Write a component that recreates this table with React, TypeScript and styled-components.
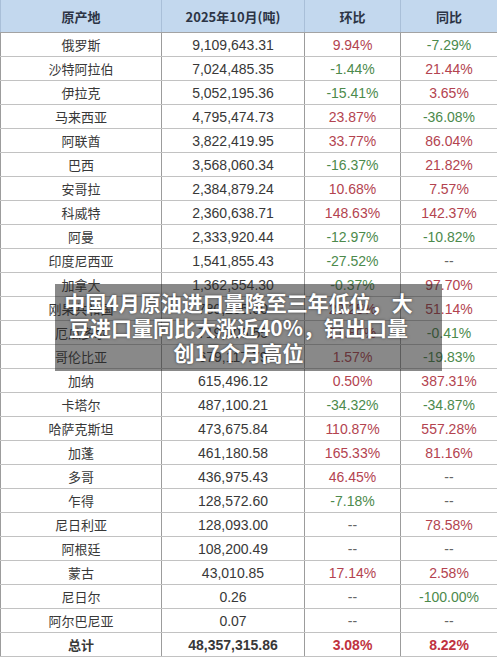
import styled, { createGlobalStyle } from "styled-components";

type Tone = "up" | "down" | "none";

interface Row {
    name: string;
    amount: string;
    mom: string;
    yoy: string;
}

const rows: Row[] = [
    { name: "俄罗斯", amount: "9,109,643.31", mom: "9.94%", yoy: "-7.29%" },
    { name: "沙特阿拉伯", amount: "7,024,485.35", mom: "-1.44%", yoy: "21.44%" },
    { name: "伊拉克", amount: "5,052,195.36", mom: "-15.41%", yoy: "3.65%" },
    { name: "马来西亚", amount: "4,795,474.73", mom: "23.87%", yoy: "-36.08%" },
    { name: "阿联酋", amount: "3,822,419.95", mom: "33.77%", yoy: "86.04%" },
    { name: "巴西", amount: "3,568,060.34", mom: "-16.37%", yoy: "21.82%" },
    { name: "安哥拉", amount: "2,384,879.24", mom: "10.68%", yoy: "7.57%" },
    { name: "科威特", amount: "2,360,638.71", mom: "148.63%", yoy: "142.37%" },
    { name: "阿曼", amount: "2,333,920.44", mom: "-12.97%", yoy: "-10.82%" },
    { name: "印度尼西亚", amount: "1,541,855.43", mom: "-27.52%", yoy: "--" },
    { name: "加拿大", amount: "1,362,554.30", mom: "-0.37%", yoy: "97.70%" },
    { name: "刚果共和国", amount: "780,255.50", mom: "22.25%", yoy: "51.14%" },
    { name: "厄瓜多尔", amount: "719,306.55", mom: "21.80%", yoy: "-0.41%" },
    { name: "哥伦比亚", amount: "679,117.79", mom: "1.57%", yoy: "-19.83%" },
    { name: "加纳", amount: "615,496.12", mom: "0.50%", yoy: "387.31%" },
    { name: "卡塔尔", amount: "487,100.21", mom: "-34.32%", yoy: "-34.87%" },
    { name: "哈萨克斯坦", amount: "473,675.84", mom: "110.87%", yoy: "557.28%" },
    { name: "加蓬", amount: "461,180.58", mom: "165.33%", yoy: "81.16%" },
    { name: "多哥", amount: "436,975.43", mom: "46.45%", yoy: "--" },
    { name: "乍得", amount: "128,572.60", mom: "-7.18%", yoy: "--" },
    { name: "尼日利亚", amount: "128,093.00", mom: "--", yoy: "78.58%" },
    { name: "阿根廷", amount: "108,200.49", mom: "--", yoy: "--" },
    { name: "蒙古", amount: "43,010.85", mom: "17.14%", yoy: "2.58%" },
    { name: "尼日尔", amount: "0.26", mom: "--", yoy: "-100.00%" },
    { name: "阿尔巴尼亚", amount: "0.07", mom: "--", yoy: "--" },
];

const toneOf = (v: string): Tone => {
    if (v === "--") return "none";
    return v.startsWith("-") ? "down" : "up";
};

const App = () => {
    return (
        <>
            <GlobalStyle />
            <Page>
                <Table>
                    <colgroup>
                        <col style={{ width: 161 }} />
                        <col style={{ width: 143 }} />
                        <col style={{ width: 96 }} />
                        <col style={{ width: 97 }} />
                    </colgroup>
                    <thead>
                        <tr>
                            <HeadCell>原产地</HeadCell>
                            <HeadCell>2025年10月(吨)</HeadCell>
                            <HeadCell>环比</HeadCell>
                            <HeadCell>同比</HeadCell>
                        </tr>
                    </thead>
                    <tbody>
                        {rows.map((r) => (
                            <tr key={r.name}>
                                <NameCell>{r.name}</NameCell>
                                <Cell>{r.amount}</Cell>
                                <Cell $tone={toneOf(r.mom)}>{r.mom}</Cell>
                                <Cell $tone={toneOf(r.yoy)}>{r.yoy}</Cell>
                            </tr>
                        ))}
                        <tr>
                            <NameCell $bold>总计</NameCell>
                            <Cell $bold>48,357,315.86</Cell>
                            <Cell $bold $tone="total">3.08%</Cell>
                            <Cell $bold $tone="total">8.22%</Cell>
                        </tr>
                    </tbody>
                </Table>
                <Banner>
                    中国4月原油进口量降至三年低位，大
                    <br />
                    豆进口量同比大涨近40%，铝出口量
                    <br />
                    创17个月高位
                </Banner>
            </Page>
        </>
    );
};

export default App;

const GlobalStyle = createGlobalStyle`
    html, body {
        margin: 0;
        padding: 0;
        background: #ffffff;
    }
    body {
        font-family: "Liberation Sans", "Noto Sans CJK SC", sans-serif;
    }
`;

const Page = styled.div`
    position: relative;
    width: 497px;
    height: 658px;
    overflow: hidden;
    background: #ffffff;
`;

const Table = styled.table`
    width: 497px;
    border-collapse: collapse;
    table-layout: fixed;
    border-left: 1px solid #b4b4b4;
    border-right: 1px solid #b4b4b4;
`;

const HeadCell = styled.th`
    height: 32px;
    padding: 0;
    background: #c3d8ee;
    color: #2c3445;
    font-family: "Noto Sans CJK SC", sans-serif;
    font-size: 13px;
    font-weight: 700;
    text-align: center;
    border-left: 1px solid #a9bfd8;
    border-bottom: 1px solid #a3a3a3;
`;

const Cell = styled.td<{ $tone?: Tone | "total"; $bold?: boolean }>`
    height: 23px;
    padding: 0;
    text-align: center;
    font-size: 14px;
    font-weight: ${(p) => (p.$bold ? 700 : 400)};
    color: ${(p) =>
        p.$tone === "up"
            ? "#b3434f"
            : p.$tone === "down"
            ? "#4c8a4c"
            : p.$tone === "total"
            ? "#c0333f"
            : p.$tone === "none"
            ? "#666666"
            : "#383838"};
    border-left: 1px solid #9c9c9c;
    border-bottom: 1px solid #c2c2c2;
`;

const NameCell = styled(Cell)`
    font-family: "Noto Sans CJK SC", sans-serif;
    font-size: 13px;
    color: #383838;
`;

const Banner = styled.div`
    position: absolute;
    top: 284px;
    left: 55px;
    width: 387px;
    height: 87px;
    box-sizing: border-box;
    padding: 6px 20px 0 0;
    background: rgba(40, 40, 40, 0.55);
    color: #ffffff;
    font-family: "Noto Sans CJK SC", sans-serif;
    font-size: 21px;
    font-weight: 700;
    line-height: 25px;
    text-align: center;
    white-space: nowrap;
    text-shadow: 0 0 3px rgba(0, 0, 0, 0.55);
`;
